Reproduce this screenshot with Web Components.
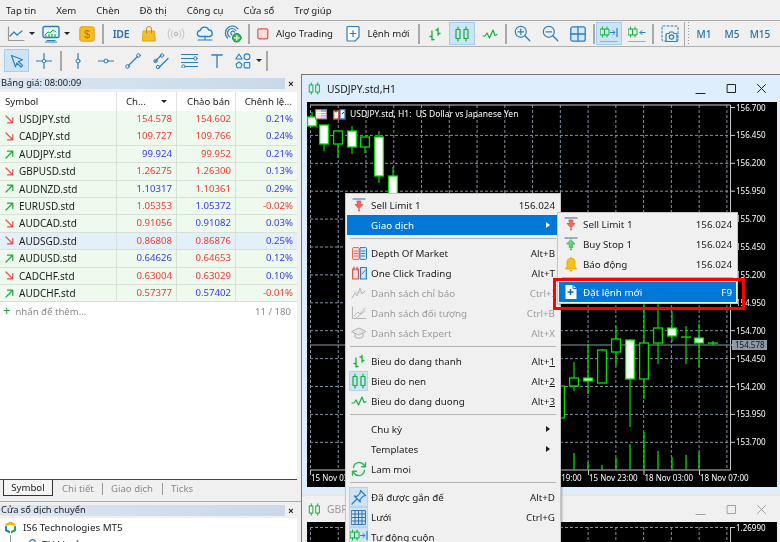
<!DOCTYPE html>
<html><head><meta charset="utf-8"><style>
html,body{margin:0;padding:0;width:780px;height:542px;overflow:hidden;background:#f0f0f0;font:9.6px "Noto Sans","Liberation Sans",sans-serif;color:#1c1c1c}
</style></head><body>
<mt-app>
  <mt-menubar><span>Tap tin</span><span>Xem</span><span>Chèn</span><span>Đồ thị</span><span>Công cụ</span><span>Cửa sổ</span><span>Trợ giúp</span></mt-menubar>
  <mt-toolbar kind="a">
    <tool-btn w="34" icon="line" dd style="--dd:4px"></tool-btn><tool-btn w="35" icon="monitor" dd style="--dd:4px"></tool-btn><tool-btn w="28" icon="dollar"></tool-btn><tool-sep></tool-sep>
    <tool-btn w="32" icon="ide"></tool-btn><tool-btn w="24" icon="bag"></tool-btn><tool-btn w="30" icon="signal"></tool-btn><tool-btn w="28" icon="cloud"></tool-btn><tool-btn w="28" icon="vps"></tool-btn><tool-sep></tool-sep>
    <tool-btn w="88" icon="algo" label="Algo Trading"></tool-btn><tool-btn w="78" icon="doc" label="Lệnh mới"></tool-btn><tool-sep></tool-sep>
    <tool-btn w="28" icon="bars"></tool-btn><tool-btn w="26" icon="candles" on></tool-btn><tool-btn w="29" icon="zig"></tool-btn><tool-sep></tool-sep>
    <tool-btn w="28" icon="zin"></tool-btn><tool-btn w="28" icon="zout"></tool-btn><tool-btn w="28" icon="grid"></tool-btn><tool-sep></tool-sep>
    <tool-btn w="26" icon="auto" on></tool-btn><tool-btn w="29" icon="shift"></tool-btn><tool-sep></tool-sep>
    <tool-btn w="30" icon="shot"></tool-btn><tool-grip></tool-grip>
    <tool-btn w="28" text="M1"></tool-btn><tool-btn w="28" text="M5"></tool-btn><tool-btn w="28" text="M15"></tool-btn>
  </mt-toolbar>
  <mt-toolbar kind="b">
    <tool-btn w="25" icon="cursor" on></tool-btn><tool-btn w="30" icon="cross"></tool-btn><tool-sep></tool-sep>
    <tool-btn w="30" icon="vline"></tool-btn><tool-btn w="26" icon="hline"></tool-btn><tool-btn w="28" icon="trend"></tool-btn><tool-btn w="28" icon="chan"></tool-btn><tool-btn w="28" icon="fib"></tool-btn><tool-btn w="28" icon="text"></tool-btn><tool-btn w="34" icon="shapes" dd style="--dd:5px"></tool-btn><tool-sep></tool-sep>
  </mt-toolbar>
  <mt-main>
    <mt-left>
      <market-watch title="Bảng giá: 08:00:09">
        <quote-row dir="d" sym="USDJPY.std" a="154.578" ac="r" b="154.602" bc="r" s="0.21%"></quote-row>
        <quote-row dir="d" sym="CADJPY.std" a="109.727" ac="r" b="109.766" bc="r" s="0.24%"></quote-row>
        <quote-row dir="u" sym="AUDJPY.std" a="99.924" ac="u" b="99.952" bc="r" s="0.21%"></quote-row>
        <quote-row dir="d" sym="GBPUSD.std" a="1.26275" ac="r" b="1.26300" bc="r" s="0.13%"></quote-row>
        <quote-row dir="u" sym="AUDNZD.std" a="1.10317" ac="u" b="1.10361" bc="r" s="0.29%"></quote-row>
        <quote-row dir="u" sym="EURUSD.std" a="1.05353" ac="r" b="1.05372" bc="u" s="-0.02%" sc="r"></quote-row>
        <quote-row dir="d" sym="AUDCAD.std" a="0.91056" ac="r" b="0.91082" bc="u" s="0.03%"></quote-row>
        <quote-row dir="d" sym="AUDSGD.std" a="0.86808" ac="r" b="0.86876" bc="r" s="0.25%" sel></quote-row>
        <quote-row dir="u" sym="AUDUSD.std" a="0.64626" ac="u" b="0.64653" bc="r" s="0.12%"></quote-row>
        <quote-row dir="d" sym="CADCHF.std" a="0.63004" ac="r" b="0.63029" bc="r" s="0.10%"></quote-row>
        <quote-row dir="u" sym="AUDCHF.std" a="0.57377" ac="r" b="0.57402" bc="u" s="-0.01%" sc="r"></quote-row>
      </market-watch>
      <nav-panel title="Cửa sổ dịch chuyển"></nav-panel>
    </mt-left>
    <mt-mdi>
      <chart-window name="USDJPY.std,H1" main></chart-window>
      <chart-window name="GBPUSD.std,H1"></chart-window>
    </mt-mdi>
  </mt-main>
  <ctx-menu style="left:345px;top:193px;width:212px">
    <menu-row icon="sell" label="Sell Limit 1" sc="156.024"></menu-row>
    <menu-row label="Giao dịch" hi arrow></menu-row>
    <menu-sep></menu-sep>
    <menu-row icon="depth" label="Depth Of Market" sc="Alt+B"></menu-row>
    <menu-row icon="oneclick" label="One Click Trading" sc="Alt+T"></menu-row>
    <menu-row icon="mind" label="Danh sách chỉ báo" sc="Ctrl+I" dis></menu-row>
    <menu-row icon="mobj" label="Danh sách đối tượng" sc="Ctrl+B" dis></menu-row>
    <menu-row icon="mcap" label="Danh sách Expert" sc="Alt+X" dis></menu-row>
    <menu-sep></menu-sep>
    <menu-row icon="bars" label="Bieu do dang thanh" sc="Alt+" u="1"></menu-row>
    <menu-row icon="candles" label="Bieu do nen" sc="Alt+" u="2" chk></menu-row>
    <menu-row icon="zig" label="Bieu do dang duong" sc="Alt+" u="3"></menu-row>
    <menu-sep></menu-sep>
    <menu-row label="Chu kỳ" arrow></menu-row>
    <menu-row label="Templates" arrow></menu-row>
    <menu-row icon="refresh" label="Lam moi"></menu-row>
    <menu-sep></menu-sep>
    <menu-row icon="pin" label="Đã được gắn đế" sc="Alt+D" chk></menu-row>
    <menu-row icon="mgrid" label="Lưới" sc="Ctrl+G" chk></menu-row>
    <menu-row icon="auto" label="Tự động cuộn" sc="" chk></menu-row>
  </ctx-menu>
  <ctx-menu style="left:557px;top:212px;width:177px">
    <menu-row icon="sell" label="Sell Limit 1" sc="156.024"></menu-row>
    <menu-row icon="buy" label="Buy Stop 1" sc="156.024"></menu-row>
    <menu-row icon="bell" label="Báo động" sc="156.024"></menu-row>
    <menu-sep></menu-sep>
    <menu-row icon="neworder" label="Đặt lệnh mới" sc="F9" hi></menu-row>
  </ctx-menu>
  <red-box></red-box>
</mt-app>
<script>
const B='#2a7fc0',G='#12b03c';
const s=(w,h,c)=>`<svg width="${w}" height="${h}" viewBox="0 0 ${w} ${h}" fill="none" stroke-linecap="round" stroke-linejoin="round">${c}</svg>`;
const cdl=(x,y1,y2,t,b,col=G,sw=1.2)=>`<path d="M${x} ${y1}V${t}M${x} ${b}V${y2}" stroke="${col}" stroke-width="${sw}"/><rect x="${x-2}" y="${t}" width="4" height="${b-t}" stroke="${col}" stroke-width="${sw}"/>`;
const ICON={
line:s(18,16,`<path d="M1.5 1v13.5H17" stroke="#999" stroke-width="1.2"/><path d="M3 10l4-4 3 3 5-4" stroke="${B}" stroke-width="1.2"/>`),
monitor:s(18,18,`<rect x="1" y="1.5" width="16" height="11" rx="1.5" stroke="${B}" stroke-width="1.4" fill="#eaf4fb"/><path d="M3 10l3-3 2 1 3-3 3 2" stroke="${G}" stroke-width="1"/><path d="M4 10.5v1M7 9.5v2M10 9v2.500M13 9.500v2" stroke="${G}" stroke-width="1.200"/><path d="M5 15.500h8M3.500 17h11" stroke="${B}" stroke-width="1.200"/>`),
dollar:s(16,16,`<rect x=".8" y=".8" width="14.400" height="14.400" rx="2" fill="#f7bd22" stroke="#e2a10f"/><text x="8" y="12" font-size="11" text-anchor="middle" fill="#a8740a" font-family="Liberation Sans">$</text>`),
ide:`<span style="font:600 10.500px 'Noto Sans';color:#2a6fae;letter-spacing:-.3px">IDE</span>`,
bag:s(14,16,`<path d="M1.500 5h11l.8 10H.7z" fill="#f3bd2a" stroke="#e0a513"/><path d="M4.500 7V3a2.500 2.500 0 015 0v4" stroke="#c98f0a" stroke-width="1"/>`),
signal:s(18,14,`<circle cx="9" cy="7" r="1.800" stroke="#b0b0b0"/><path d="M5.500 3.500a5 5 0 000 7M12.500 3.500a5 5 0 010 7M3 1.500a8.500 8.500 0 000 11M15 1.500a8.500 8.500 0 010 11" stroke="#c4c4c4"/>`),
cloud:s(18,16,`<path d="M4.500 10.500a3 3 0 01-.3-6 4.500 4.500 0 018.500-.5 3.300 3.300 0 011 6.500z" stroke="${B}" stroke-width="1.300" fill="#e9f4fb"/><path d="M9 10.500v3M2 14h14" stroke="${B}" stroke-width="1.200"/>`),
vps:s(18,18,`<path d="M3.500 13A7 7 0 1114 3.800M6 12a4.500 4.500 0 115.800-6.500M8 10a2 2 0 112.600-2.800" stroke="${B}" stroke-width="1.200"/><circle cx="12.800" cy="12.800" r="4.300" fill="#3cb85c" stroke="#1b8f3a"/><path d="M12.800 10.500v4.600M10.500 12.800h4.600" stroke="#fff" stroke-width="1.200"/>`),
algo:s(12,12,`<rect x=".8" y=".8" width="10" height="10" rx="1.500" fill="#fbdcd9" stroke="#d9574f" stroke-width="1.200"/>`),
doc:s(14,16,`<path d="M1 1.500a1 1 0 011-1h10a1 1 0 011 1V11l-4 4H2a1 1 0 01-1-1z" stroke="${B}" stroke-width="1.200" fill="#fff"/><path d="M7 4.500v6M4 7.500h6" stroke="${B}" stroke-width="1.200"/>`),
bars:s(14,14,`<path d="M4 3.500v10M1.500 9.500H4M4 12.500h2.500" stroke="${G}" stroke-width="1.300" stroke-linecap="butt"/><path d="M10 .8v8M7.500 3H10M10 6.500h2.500" stroke="${G}" stroke-width="1.300" stroke-linecap="butt"/>`),
candles:s(16,16,`${cdl(4,1,15,3.500,12.500)}${cdl(12,1,15,3.500,12.500)}`),
zig:s(16,12,`<path d="M1 8h2l2-3 2.500 5L11 2l2 5.500 2-1" stroke="${G}" stroke-width="1.200"/>`),
zin:s(17,17,`<circle cx="6.800" cy="6.800" r="5.500" stroke="${B}" stroke-width="1.200"/><path d="M6.800 4v5.600M4 6.800h5.600" stroke="${B}" stroke-width="1.200"/><path d="M10.800 10.800l5 5" stroke="${B}" stroke-width="1.300"/>`),
zout:s(17,17,`<circle cx="6.800" cy="6.800" r="5.500" stroke="${B}" stroke-width="1.200"/><path d="M4 6.800h5.600" stroke="${B}" stroke-width="1.200"/><path d="M10.800 10.800l5 5" stroke="${B}" stroke-width="1.300"/>`),
grid:s(16,16,`<rect x=".8" y=".8" width="14.400" height="14.400" rx="2" stroke="${B}" stroke-width="1.300" fill="#d7e9f7"/><path d="M8 1v14M1 8h14" stroke="${B}" stroke-width="1.300"/>`),
auto:s(18,18,`<g transform="translate(0 -1)">${cdl(2.500,3,13,5,11,G,1)}${cdl(7,3,13,5,11,G,1)}</g><path d="M10.500 7.500h4M13 5.500l2 2-2 2" stroke="${B}" stroke-width="1"/><path d="M17 3.500v8" stroke="${B}" stroke-width="1.200"/><path d="M0 16.500h17" stroke="#aaa" stroke-width="1.200"/>`),
shift:s(18,18,`<g transform="translate(0 -1)">${cdl(2.500,3,13,5,11,G,1)}${cdl(7,3,13,5,11,G,1)}</g><path d="M12 7.500h5M14 5.500l-2 2 2 2" stroke="${B}" stroke-width="1"/><path d="M0 16.500h17" stroke="#aaa" stroke-width="1.200"/>`),
shot:s(18,18,`<rect x="1" y="1" width="16" height="15" rx="1" stroke="${B}" stroke-dasharray="2 2"/><path d="M5 16.500v-7a1 1 0 011-1h2l1-1.500h3l1 1.500h2a1 1 0 011 1v7z" fill="#f0f0f0" stroke="${B}" stroke-width="1.200"/><circle cx="10.500" cy="12" r="2.200" stroke="${B}" stroke-width="1.200"/>`),
cursor:s(14,14,`<path d="M1.500 1.500l11 4.200-4 1.800 4 4-1.500 1.500-4-4-1.500 3.800z" stroke="${B}" stroke-width="1.200" fill="#d6e8f6"/>`),
cross:s(16,16,`<path d="M8 .5v5M8 10.500v5M.5 8h5M10.500 8h5" stroke="${B}" stroke-width="1.200"/><circle cx="8" cy="8" r="1.800" stroke="${B}"/>`),
vline:s(6,16,`<path d="M3 .5v5.500M3 10v5.500" stroke="${B}" stroke-width="1.200"/><circle cx="3" cy="8" r="2" stroke="${B}"/>`),
hline:s(16,6,`<path d="M.5 3h5.500M10 3h5.500" stroke="${B}" stroke-width="1.200"/><circle cx="8" cy="3" r="2" stroke="${B}"/>`),
trend:s(16,16,`<path d="M3.500 12.500l9-9" stroke="${B}" stroke-width="1.200"/><circle cx="2.500" cy="13.500" r="1.800" stroke="${B}"/><circle cx="13.500" cy="2.500" r="1.800" stroke="${B}"/>`),
chan:s(17,16,`<path d="M2 8.500L8 2.500M6 14.500l9-9" stroke="${B}" stroke-width="1.200"/><circle cx="9" cy="2.500" r="1.700" stroke="${B}"/><circle cx="2.500" cy="8" r="1.700" stroke="${B}"/><circle cx="5" cy="14" r="1.700" stroke="${B}"/>`),
fib:s(17,15,`<path d="M.5 1.500h16M.5 5.500h12M.5 9.500h16M5 13.500h11.500" stroke="${B}" stroke-width="1.200"/><circle cx="14.500" cy="5.500" r="1.700" stroke="${B}"/><circle cx="2.500" cy="13.500" r="1.700" stroke="${B}"/>`),
text:s(12,14,`<path d="M.8 1h10.400M6 1v12.500" stroke="${B}" stroke-width="1.300"/>`),
shapes:s(16,16,`<path d="M4 1l3.200 5H.8z" stroke="${B}" stroke-width="1.100"/><circle cx="12" cy="3.800" r="2.900" stroke="${B}" stroke-width="1.100"/><path d="M4 9l3 2.200-1.100 3.500H2.100L1 11.200z" stroke="${B}" stroke-width="1.100"/><rect x="9.200" y="9.500" width="5.600" height="5.400" rx=".8" stroke="${B}" stroke-width="1.100"/>`),
sell:s(14,14,`<path d="M1 1h12" stroke="#2a6fb0" stroke-width="1.200"/><path d="M5.200 3h3.600v3.500H11L7 10.800 3 6.500h2.200z" fill="#ef6b62" stroke="#d9483f" stroke-width=".7"/><circle cx="7" cy="12.300" r="1.100" fill="#e5534a"/>`),
buy:s(14,14,`<path d="M1 1h12" stroke="#2a6fb0" stroke-width="1.200"/><path d="M7 2.700l4 4.300H8.800v3.500H5.200V7H3z" fill="#5fd37a" stroke="#2fae4e" stroke-width=".7"/><circle cx="7" cy="12.300" r="1.100" fill="#38b956"/>`),
bell:s(14,15,`<path d="M7 1a4 4 0 00-4 4v4.500L1.300 12h11.400L11 9.500V5a4 4 0 00-4-4z" fill="#f8c212" stroke="#dba008" stroke-width=".8"/><path d="M5.500 13a1.500 1.500 0 003 0z" fill="#dba008"/>`),
neworder:s(14,16,`<path d="M1.500 1h7.500l3.500 3.500V15h-11z" fill="#fff"/><path d="M9 1v3.500h3.500" stroke="#0078d7"/><path d="M6.500 5v6M3.500 8h6" stroke="#0a68b8" stroke-width="1.500" stroke-linecap="butt"/>`),
depth:s(15,13,`<rect x=".6" y=".6" width="6.500" height="11.800" rx=".8" fill="#fbe2df" stroke="#e0605a"/><rect x="8" y=".6" width="6.500" height="11.800" rx=".8" fill="#dbe9f6" stroke="${B}"/><path d="M2 4h3.500M2 6.500h3.500M2 9h3.500" stroke="#e0605a"/><path d="M9.500 4H13M9.500 6.500H13M9.500 9H13" stroke="${B}"/>`),
oneclick:s(15,14,`<path d="M.7 3h5.800v10H.7z" fill="#fbe2df" stroke="#d9504a" stroke-width="1.200"/><path d="M2 1v3M5 1v3" stroke="#d9504a" stroke-width="1.200"/><path d="M8.500 1.500h5.800v11.500H8.500z" fill="#dbe9f6" stroke="${B}" stroke-width="1.200"/><path d="M10 8l3-3.500" stroke="${B}"/>`),
mind:s(16,14,`<path d="M1 12l3-5 2 3 3-8 2 6 3-3" stroke="#b6b6b6"/><path d="M3 5l3 2 3-1 5 1" stroke="#c8c8c8" stroke-dasharray="1 1"/>`),
mobj:s(16,14,`<path d="M1.500 1v11.500H15" stroke="#b6b6b6"/><path d="M3 10l4-4 2 2 5-6M5 12l9-7" stroke="#b8b8b8"/>`),
mcap:s(16,14,`<path d="M1 5.500L8 2l7 3.500L8 9z" stroke="#b0b0b0" fill="#e8e8e8"/><path d="M4 7.500V11c2 1.500 6 1.500 8 0V7.500" stroke="#b0b0b0"/>`),
refresh:s(16,16,`<path d="M2.500 6.500A5.800 5.800 0 0113 4l1 1.500M13.500 9.500A5.800 5.800 0 013 12l-1-1.500" stroke="#2fb457" stroke-width="1.400"/><path d="M14.500 1.800v4h-4M1.500 14.200v-4h4" stroke="#2fb457" stroke-width="1.400"/>`),
pin:s(16,16,`<path d="M9.500 1.500l5 5-2.500.8-3 3 .3 2.700-6-6 2.700.3 3-3z" stroke="${B}" stroke-width="1.200" fill="#cfe3f4"/><path d="M5.500 10.500L1 15" stroke="${B}" stroke-width="1.300"/>`),
mgrid:s(15,15,`<rect x=".6" y=".6" width="13.800" height="13.800" fill="#d8e8f5" stroke="#2d6fb0"/><path d="M4 1v13M7.500 1v13M11 1v13M1 4h13M1 7.500h13M1 11h13" stroke="#2d6fb0"/>`),
};
ICON.up=s(9,9,`<path d="M1 8l6.500-6.500M2.500 1.200h5.300v5.300" stroke="#21a83f" stroke-width="1.200"/>`);
ICON.dn=s(9,9,`<path d="M1 1l6.500 6.500M2.500 7.800h5.300V2.500" stroke="#e2504f" stroke-width="1.200"/>`);
function def(name,css,render){customElements.define(name,class extends HTMLElement{connectedCallback(){if(this.shadowRoot)return;this.attachShadow({mode:'open'}).innerHTML=`<style>${css}</style>`+render(this)}})}
const a=(e,n,d='')=>e.getAttribute(n)??d;
def('mt-app',`:host{display:flex;flex-direction:column;width:780px;height:542px;position:relative;overflow:hidden;background:#f0f0f0;filter:blur(.28px)}`,()=>`<slot></slot>`);
def('mt-menubar',`:host{display:flex;height:21px;box-sizing:border-box;padding:0 0 0 6px;border-bottom:1px solid #a8a8a8;align-items:center;font-size:9.6px}::slotted(span){margin-right:20px;color:#1c1c1c}`,()=>`<slot></slot>`);
def('mt-toolbar',`:host{display:flex;align-items:center;box-sizing:border-box;height:26px;padding:0 0 0 4px;border-bottom:1px solid #b0b0b0}:host([kind=b]){border-bottom:0;height:27px}`,()=>`<slot></slot>`);
def('tool-sep',`:host{display:block;width:1.500px;height:20px;background:#a9a9a9;margin:0 1.250px;flex:none}`,()=>``);
def('tool-grip',`:host{display:block;width:6px;height:24px;margin:0 0 0 -1px;flex:none;border-left:1px solid #a9a9a9;box-sizing:border-box;position:relative}i{position:absolute;left:3px;top:0;bottom:0;width:1px;background:repeating-linear-gradient(#999 0 1px,transparent 1px 3px)}`,()=>`<i></i>`);
def('tool-btn',`:host{display:flex;align-items:center;justify-content:center;height:23px;flex:none;box-sizing:border-box;gap:4px}:host([on]){background:#cde4f7;box-shadow:inset 0 0 0 1px #a5cdee}.l{color:#1c1c1c;font-size:9.6px;white-space:nowrap;margin-left:3px}.t{color:#2a6fae;font-size:10px;font-weight:500}.dd{width:0;height:0;border:3px solid transparent;border-top:3.500px solid #222;border-bottom:0;margin-left:calc(var(--dd,7px) - 4px)}svg{display:block}`,e=>{e.style.width=a(e,'w')+'px';return `${a(e,'icon')?ICON[a(e,'icon')]:''}${e.hasAttribute('label')?`<span class="l">${a(e,'label')}</span>`:''}${e.hasAttribute('text')?`<span class="t">${a(e,'text')}</span>`:''}${e.hasAttribute('dd')?'<i class="dd"></i>':''}`});
def('mt-main',`:host{display:flex;flex:1;min-height:0}`,()=>`<slot></slot>`);
def('mt-left',`:host{display:flex;flex-direction:column;width:301px;flex:none;box-sizing:border-box}`,()=>`<slot></slot>`);
const titleBar=`.tb{display:flex;align-items:center;height:11px;font-size:9.3px;margin:0 4px 0 0}.tb b{font-weight:400;padding-left:1px;background:linear-gradient(90deg,#dbe6f1,#c9d9e9);height:11px;line-height:10px;width:285px;flex:none;box-sizing:border-box}.tb i{font:700 9px "Liberation Sans";flex:1;text-align:center;color:#111}`;
def('market-watch',`:host{display:flex;flex-direction:column;height:427px;flex:none;padding-top:4px;box-sizing:border-box}${titleBar}
.bx{flex:1;background:#fff;margin:3px 4px 0 0;display:flex;flex-direction:column;border-bottom:1px solid #444}
.hd{display:grid;grid-template-columns:117px 60px 59px 61px;height:19px;align-items:center;font-size:9.6px}.hd span{padding:0 5px;border-right:1px solid #e2e2e2;height:100%;display:flex;align-items:center;box-sizing:border-box}.hd .r{justify-content:flex-end}.hd .c{justify-content:space-between;padding-left:9px;padding-right:9px}.hd .c i{border:3px solid transparent;border-top:3.500px solid #222;border-bottom:0}
.ft{display:flex;justify-content:space-between;align-items:center;height:18px;color:#8c8c8c;padding:0 6px 0 3px;font-size:9.600px}.ft em{font-style:normal;color:#22a83d;font-size:13px;line-height:10px;margin-right:5px;font-weight:500}
.tabs{display:flex;height:21px;align-items:flex-start;color:#8a8a8a;font-size:9.6px;padding-left:3px}.tabs span{height:14px;line-height:13px;padding:2px 0}.tabs .on{width:50px;height:16px;box-sizing:border-box;text-align:center;color:#1c1c1c;border:1px solid #333;border-top:0;background:#f5f5f5;padding-top:1px;margin-right:9px}.tabs .s{border-left:1px solid #999;height:12px;margin:3px 0;padding:0;width:0}`,
e=>`<div class="tb"><b>${a(e,'title')}</b><i>×</i></div><div class="bx"><div class="hd"><span>Symbol</span><span class="c">Ch...<i></i></span><span class="r">Chào bán</span><span class="r" style="border:0">Chênh lệ...</span></div><slot></slot><div class="ft"><span><em>+</em>nhấn để thêm...</span><span>11 / 180</span></div></div><div class="tabs"><span class="on">Symbol</span><span style="width:40px">Chi tiết</span><span class="s"></span><span style="padding-left:8px;width:51px">Giao dịch</span><span class="s"></span><span style="padding-left:8px">Ticks</span></div>`);
def('quote-row',`:host{display:grid;grid-template-columns:117px 60px 59px 61px;height:17.400px;box-sizing:border-box;font-size:9.600px;line-height:16.500px;background:#eefaee}:host([sel]){background:#e3eff9}
div{border-bottom:1px solid #d9dfd9;border-right:1px solid #d8e0d8;padding:0 4px;text-align:right;box-sizing:border-box;white-space:nowrap}.sy{text-align:left;display:flex;align-items:center;color:#1c1c1c;font-size:10px;padding-left:5px;gap:5px}.r{color:#f23a3a}.u{color:#3a3af0}svg{display:block}`,
e=>`<div class="sy">${a(e,'dir')=='u'?ICON.up:ICON.dn}<span>${a(e,'sym')}</span></div><div class="${a(e,'ac')}">${a(e,'a')}</div><div class="${a(e,'bc')}">${a(e,'b')}</div><div class="${a(e,'sc','u')}" style="border-right:0">${a(e,'s')}</div>`);
def('nav-panel',`:host{display:block;flex:1;border-top:1px solid #a9a9a9;padding-top:3px;box-sizing:border-box;position:relative}${titleBar}
.l{background:#fff;margin:2px 4px 0 0;height:40px;overflow:hidden;font-size:9.800px}.i{display:flex;align-items:center;gap:6px;height:15px;padding-left:4px;padding-top:2px}.i2{padding-left:27px;gap:4px;position:relative}svg{display:block;flex:none}.i2:before{content:"";position:absolute;left:10px;top:0;height:8px;border-left:1px solid #999}`,
e=>`<div class="tb"><b>${a(e,'title')}</b><i>×</i></div><div class="l"><div class="i">${s(13,13,`<path d="M1 3l5.500-2.500L12 3l-2 2-3.500-1.500L3 5z" fill="#f0b800"/><path d="M1 4.500l2 1 0 3L6 10v2.500L1 10z" fill="#1f7fd0"/><path d="M12 4.500v5.500L7 12.500V10l3-1.500v-3z" fill="#22a83d"/>`)}<span>IS6 Technologies MT5</span></div><div class="i i2">${s(11,11,`<circle cx="5.500" cy="3.500" r="2.800" stroke="${B}" stroke-width="1.200"/><path d="M1 11c0-5 9-5 9 0" stroke="${B}" stroke-width="1.200"/>`)}<span>Tài khoản</span></div></div>`);
def('mt-mdi',`:host{display:flex;flex-direction:column;flex:1;min-width:0;border-left:1px solid #777;border-top:1px solid #777;box-sizing:border-box;overflow:hidden;background:#e6e6e6}`,()=>`<slot></slot>`);
function chartSvg(main){
 const GRID='#8191a1';const xs=[];for(let x=311.500;x<735;x+=27.760)xs.push(x);
 const W=470,H=main?385:40;
 let o=`<svg width="${W}" height="${H}" viewBox="308 ${main?103:523} ${W} ${H}" style="display:block;font:8px 'Noto Sans';fill:none;background:#000">`;
 if(!main){o+=`<path d="M311 528.500H732" stroke="${GRID}" stroke-dasharray="3 2"/>`;xs.forEach(x=>o+=`<path d="M${x} 528V563" stroke="${GRID}" stroke-dasharray="3 2"/>`);o+=`<path d="M731.500 528V563M732 528.500h4" stroke="#c8c8c8"/><text x="737" y="531.500" fill="#fff">1.26990</text></svg>`;return o}
 const labs=['156.700','156.450','156.200','155.950','155.700','155.450','155.200','154.950','154.700','154.450','154.200','153.950','153.700'];
 labs.forEach((t,i)=>{const y=108.500+i*27.900;if(i)o+=`<path d="M311 ${y}H731" stroke="${GRID}" stroke-dasharray="3 2"/>`;o+=`<path d="M732 ${y}h4" stroke="#c8c8c8"/><text x="737" y="${y+3}" fill="#fff">${t}</text>`});
 xs.forEach(x=>o+=`<path d="M${x} 106V471" stroke="${GRID}" stroke-dasharray="3 2"/>`);
 o+=`<path d="M311 106H731.500V471H311" stroke="#c8c8c8"/><path d="M311 346H732" stroke="#8a97a3"/>`;
 [[311,'15 Nov 03:00'],[533,'15 Nov 19:00'],[589,'15 Nov 23:00'],[644.500,'18 Nov 03:00'],[700,'18 Nov 07:00']].forEach(([x,t])=>{o+=`<path d="M${x+.5} 471v5" stroke="#c8c8c8"/><text x="${x+1}" y="482" fill="#fff">${t}</text>`});
 const C=[[313,113,128,118,127,1],[325,126,152,126,145,1],[339,132,159,132,145,0],[353,127,155,132,148,1],[366,138,154,138,148,0],[380,132,184,138,177,1],[394,168,200,177,200,1],
 [561,387,419,387,419,0],[575,363,392,379,387,0],[589,345,395,379,382,1],[603,350,384,351,384,0],[617,327,367,340,353,0],[631,340,428,341,380,1],[645,305,400,344,380,0],[659,305,365,329,344,0],[673,312,343,329,337,1],[687,327,365,338,338,0],[700,325,368,339,344,1],[714,342,346,344,344,0]];
 C.forEach(([x,h,l,t,b,f])=>{o+=`<path d="M${x} ${h}V${l}" stroke="#00e000" stroke-width="1.200"/><rect x="${x-4.400}" y="${t}" width="8.800" height="${Math.max(b-t,.1)}" fill="${f?'#fff':'#000'}" stroke="#00e000" stroke-width="1.300"/>`});
 [[575,454],[589,463],[603,466],[617,459],[631,445],[645,433],[659,452],[673,458],[687,456],[700,453]].forEach(([x,y])=>o+=`<path d="M${x} ${y}V471" stroke="#00e000" stroke-width="1.300"/>`);
 o+=`<rect x="733" y="341" width="35" height="10" fill="#8d9aa6"/><text x="736" y="349" fill="#111">154.578</text><path d="M732 346h2" stroke="#c8c8c8"/>`;
 o+=`<g transform="translate(316 110)"><rect x=".5" y=".5" width="11" height="9.500" fill="#f7d4d0" stroke="#d8534b"/><rect x="6" y="1" width="5.500" height="9" fill="#88b5da"/><path d="M1 3.500h10M1 5.700h10M1 8h10" stroke="#fff"/></g>`;
 o+=`<g transform="translate(334 110)"><path d="M.7 2h5v8h-5z" fill="#fff" stroke="#d8534b" stroke-width="1.300"/><path d="M7 .7h5v9.300H7z" fill="#fff" stroke="#2a7fc0" stroke-width="1.300"/><path d="M3 .5v3M9 5l2-2" stroke="#333"/></g>`;
 o+=`<text x="351" y="118" fill="#fff" style="font-size:8.500px">USDJPY.std, H1:\u00a0 US Dollar vs Japanese Yen</text>`;
 return o+`</svg>`;
}
def('chart-window',`:host{display:block;flex:none;box-sizing:border-box;background:#dfeefc;padding:0 2px 7px 5px}:host(:not([main])){background:#f0f0f0;margin-top:2px;padding-bottom:0}
.t{display:flex;align-items:center;height:27px;font-size:10.300px;gap:4px;color:#1c1c1c}:host(:not([main])) .t{color:#999;height:26px}.t span{flex:1}.t svg{display:block}.ct{display:flex;width:83px;justify-content:space-between;padding-right:11px;box-sizing:border-box}:host(:not([main])) .ct{opacity:.38}`,
e=>{const m=e.hasAttribute('main');return `<div class="t" style="padding-left:1px">${ICON.candles.replace('width="16" height="16"','width="13" height="13"')}<span style="padding-left:2px">${a(e,'name')}</span><div class="ct">${s(11,11,`<path d="M1 10.500h9" stroke="#222" stroke-width="1.200"/>`)}${s(11,11,`<rect x="1.500" y="1.500" width="8" height="8" stroke="#222" stroke-width="1"/>`)}${s(11,11,`<path d="M1.500 1.500l8 8M9.500 1.500l-8 8" stroke="#222" stroke-width="1"/>`)}</div></div>${chartSvg(m)}`});
def('ctx-menu',`:host{position:absolute;display:block;background:#f0f0f0;border:1px solid #c8c8c8;padding:1px;box-shadow:1px 1px 2px rgba(0,0,0,.3)}`,()=>`<slot></slot>`);
def('menu-sep',`:host{display:block;height:8px;position:relative}i{position:absolute;left:3px;right:3px;top:3px;height:1px;background:#b4b4b4}`,()=>`<i></i>`);
def('menu-row',`:host{display:flex;align-items:center;height:20px;font-size:9.800px;color:#1c1c1c;padding-right:4px;white-space:nowrap}:host([hi]){background:#0078d7;color:#fff}:host([dis]){color:#9c9c9c}
.ic{width:24px;height:20px;flex:none;display:flex;align-items:center;justify-content:center;box-sizing:border-box}.ck{width:19px;margin:0 3px 0 2px;background:#cfe3f4;box-shadow:inset 0 0 0 1px #b6d3ec}.lb{flex:1}.ar{width:0;height:0;border:3.500px solid transparent;border-left:4px solid currentColor;border-right:0;margin-right:5px}u{text-underline-offset:1px}svg{display:block}`,
e=>`<span class="ic${e.hasAttribute('chk')?' ck':''}">${a(e,'icon')?ICON[a(e,'icon')]:''}</span><span class="lb">${a(e,'label')}</span>${e.hasAttribute('arrow')?'<i class="ar"></i>':`<span>${a(e,'sc')}${e.hasAttribute('u')?`<u>${a(e,'u')}</u>`:''}</span>`}`);
def('red-box',`:host{position:absolute;left:553px;top:278px;width:192px;height:32px;box-sizing:border-box;border:3px solid #f00;display:block;pointer-events:none}`,()=>``);
</script>
</body></html>
